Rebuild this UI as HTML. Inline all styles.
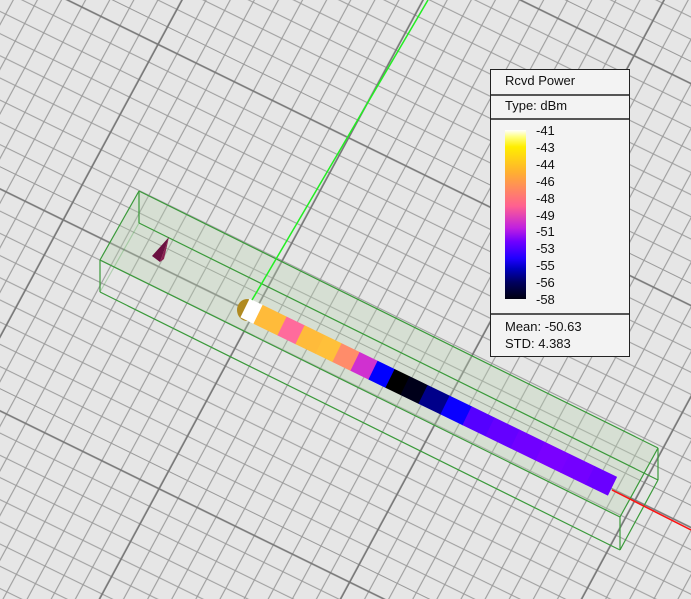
<!DOCTYPE html>
<html><head><meta charset="utf-8">
<style>
html,body{margin:0;padding:0;width:691px;height:599px;overflow:hidden;background:#e6e6e6;position:relative;}
#scene{position:absolute;left:0;top:0;display:block;}
#legend{position:absolute;left:490px;top:69px;width:138px;height:286px;background:#f3f3f3;border:1px solid #222;font-family:"Liberation Sans",Arial,sans-serif;font-size:13px;color:#111;}
.row{position:absolute;left:0;width:138px;border-bottom:2px solid #555;}
.lab{position:absolute;left:45px;line-height:17px;}
</style></head>
<body>
<svg id="scene" width="691" height="599" xmlns="http://www.w3.org/2000/svg">
<defs>
<pattern id="gp" patternUnits="userSpaceOnUse" x="0" y="0" width="10" height="10" patternTransform="matrix(19.06 9.34 -9.48 17.55 153.21 30.98)">
<g stroke="#999" stroke-width="0.05">
<line x1="1.5" y1="0" x2="1.5" y2="10"/><line x1="2.5" y1="0" x2="2.5" y2="10"/><line x1="3.5" y1="0" x2="3.5" y2="10"/><line x1="4.5" y1="0" x2="4.5" y2="10"/><line x1="5.5" y1="0" x2="5.5" y2="10"/><line x1="6.5" y1="0" x2="6.5" y2="10"/><line x1="7.5" y1="0" x2="7.5" y2="10"/><line x1="8.5" y1="0" x2="8.5" y2="10"/><line x1="9.5" y1="0" x2="9.5" y2="10"/>
<line y1="1.5" x1="0" y2="1.5" x2="10"/><line y1="2.5" x1="0" y2="2.5" x2="10"/><line y1="3.5" x1="0" y2="3.5" x2="10"/><line y1="4.5" x1="0" y2="4.5" x2="10"/><line y1="5.5" x1="0" y2="5.5" x2="10"/><line y1="6.5" x1="0" y2="6.5" x2="10"/><line y1="7.5" x1="0" y2="7.5" x2="10"/><line y1="8.5" x1="0" y2="8.5" x2="10"/><line y1="9.5" x1="0" y2="9.5" x2="10"/>
</g>
<g stroke="#777" stroke-width="0.08">
<line x1="0.5" y1="0" x2="0.5" y2="10"/><line y1="0.5" x1="0" y2="0.5" x2="10"/>
</g>
</pattern>
</defs>
<rect x="0" y="0" width="691" height="599" fill="url(#gp)"/>
<polygon points="139,191 658,448 620,517 100,260" fill="#b8d0b0" fill-opacity="0.35"/>
<g>
<ellipse cx="247" cy="310" rx="10" ry="11" fill="#b08a20"/>
<polygon id="s0" points="0,0" fill="#fff"/>
</g>
<g id="strip"></g>
<g stroke="#3a9a3a" stroke-width="1.2" fill="none">
<line x1="139" y1="191" x2="658" y2="448"/>
<line x1="100" y1="260" x2="620" y2="517"/>
<line x1="139" y1="191" x2="100" y2="260"/>
<line x1="658" y1="448" x2="620" y2="517"/>
<line x1="100" y1="292" x2="620" y2="550"/>
<line x1="139" y1="223" x2="658" y2="480"/>
<line x1="100" y1="292" x2="139" y2="223" stroke-opacity="0.3"/>
<line x1="620" y1="550" x2="658" y2="480"/>
<line x1="139" y1="191" x2="139" y2="223"/>
<line x1="100" y1="260" x2="100" y2="292"/>
<line x1="658" y1="448" x2="658" y2="480"/>
<line x1="620" y1="517" x2="620" y2="550"/>
</g>
<line x1="428" y1="0" x2="252" y2="300" stroke="#22ee22" stroke-width="1.5"/>
<line x1="612" y1="490" x2="691" y2="530" stroke="#ff1010" stroke-width="1.5"/>
<polygon points="169,237 152,256 160,262" fill="#6a1040"/>
<polygon points="169,237 160,262 164,259" fill="#8a2050"/>
</svg>
<div id="legend">
<div class="row" style="top:0;height:24px;"><span style="position:absolute;left:14px;top:3px;">Rcvd Power</span></div>
<div class="row" style="top:26px;height:22px;"><span style="position:absolute;left:14px;top:2px;">Type: dBm</span></div>
<div style="position:absolute;left:14px;top:60px;width:21px;height:169px;background:linear-gradient(#ffffff 0%,#ffff80 4%,#ffee00 10%,#ffb030 25%,#ff6090 45%,#c020e0 58%,#7000ff 66%,#2000ff 76%,#0000c0 82%,#000060 90%,#000010 100%);"></div>
<div class="lab" style="top:52px">-41</div>
<div class="lab" style="top:69px">-43</div>
<div class="lab" style="top:86px">-44</div>
<div class="lab" style="top:103px">-46</div>
<div class="lab" style="top:120px">-48</div>
<div class="lab" style="top:137px">-49</div>
<div class="lab" style="top:153px">-51</div>
<div class="lab" style="top:170px">-53</div>
<div class="lab" style="top:187px">-55</div>
<div class="lab" style="top:204px">-56</div>
<div class="lab" style="top:221px">-58</div>
<div style="position:absolute;left:0;top:243px;width:138px;border-top:2px solid #555;"></div>
<div style="position:absolute;left:14px;top:248px;line-height:17px;">Mean: -50.63<br>STD: 4.383</div>
</div>
<script>
var ns="http://www.w3.org/2000/svg";
var s=document.getElementById("strip");
var segs=[[245,258,"#ffffff"],[258,282,"#ffbb3a"],[282,300,"#ff6b9c"],[300,320,"#ffbb3a"],[320,337,"#ffc03a"],[337,355,"#ff8c6a"],[355,373,"#d030d0"],[373,390,"#0000ff"],[390,405,"#000000"],[405,423,"#00001a"],[423,445,"#00008a"],[445,467,"#0a00ff"],[467,490,"#5500ff"],[490,515,"#6400ff"],[515,540,"#7000ff"],[540,565,"#7a00ff"],[565,590,"#7400ff"],[590,612,"#6a00ff"]];
function cy(x){return 309+(x-247)*0.485;}
var nx=-4.6,ny=9.4;
function poly(x1,x2,c){var p=document.createElementNS(ns,"polygon");var a=cy(x1),b=cy(x2);
p.setAttribute("points",(x1-nx)+","+(a-ny)+" "+(x2-nx)+","+(b-ny)+" "+(x2+nx)+","+(b+ny)+" "+(x1+nx)+","+(a+ny));p.setAttribute("fill",c);s.appendChild(p);}
for(var i=0;i<segs.length;i++){poly(segs[i][0],segs[i][1]+0.5,segs[i][2]);}
</script>
</body></html>
